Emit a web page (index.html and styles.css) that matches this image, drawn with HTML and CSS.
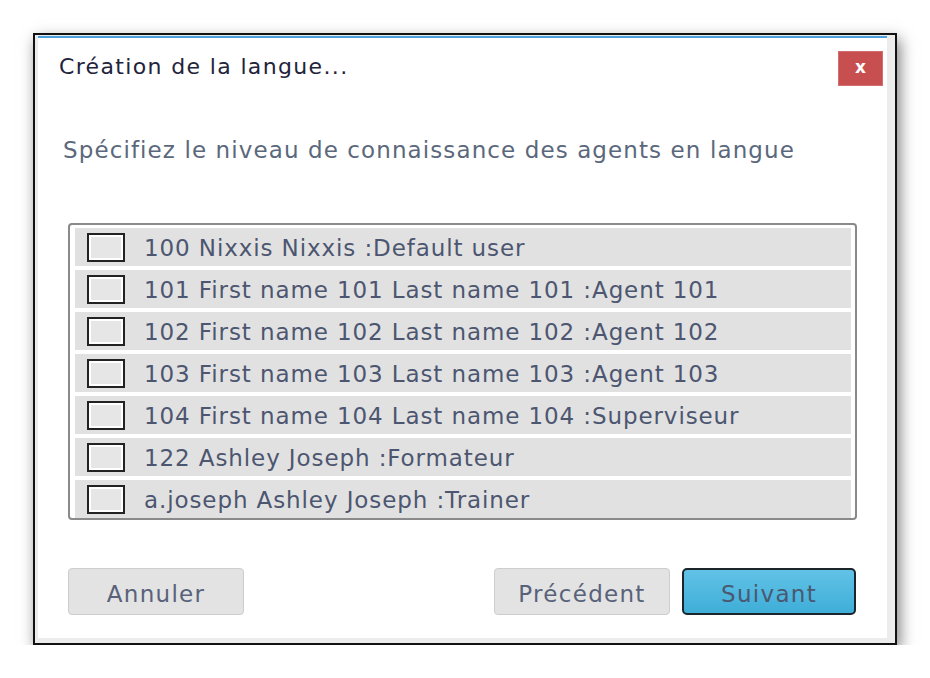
FILE: index.html
```html
<!DOCTYPE html>
<html lang="fr">
<head>
    <meta charset="UTF-8">
    <title>Création de la langue...</title>
    <link rel="stylesheet" href="styles.css">
</head>
<body>
    <div class="dlg">
        <div class="dlg-body">
            <div class="dlg-head">
                <span class="dlg-title">Création de la langue...</span>
                <span class="dlg-close">x</span>
            </div>

            <p class="dlg-hint">Spécifiez le niveau de connaissance des agents en langue</p>

            <!-- agents -->
            <div class="agent-list">
                <div class="agent-row"><span class="agent-check"></span>100 Nixxis Nixxis :Default user</div>
                <div class="agent-row"><span class="agent-check"></span>101 First name 101 Last name 101 :Agent 101</div>
                <div class="agent-row"><span class="agent-check"></span>102 First name 102 Last name 102 :Agent 102</div>
                <div class="agent-row"><span class="agent-check"></span>103 First name 103 Last name 103 :Agent 103</div>
                <div class="agent-row"><span class="agent-check"></span>104 First name 104 Last name 104 :Superviseur</div>
                <div class="agent-row"><span class="agent-check"></span>122 Ashley Joseph :Formateur</div>
                <div class="agent-row"><span class="agent-check"></span>a.joseph Ashley Joseph :Trainer</div>
            </div>

            <div class="dlg-foot">
                <span class="btn">Annuler</span>
                <span class="btn-spacer"></span>
                <span class="btn">Précédent</span>
                <span class="btn btn-primary">Suivant</span>
            </div>
        </div>
    </div>
</body>
</html>
```

FILE: styles.css
```css
body {
    margin: 0;
    background: #fff;
    font-family: "DejaVu Sans", "Open Sans", sans-serif;
}

.dlg {
    box-sizing: border-box;
    width: 864px;
    height: 612px;
    margin: 33px 0 0 33px;
    border: 2px solid #111;
    background: #ececec;
    box-shadow: 3px 6px 14px rgba(0, 0, 0, .5);
    padding: 1px 8px 5px 3px;
}

.dlg-body {
    box-sizing: border-box;
    height: 100%;
    background: #fff;
    border-top: 2px solid #4ba0e0;
}

.dlg-head {
    display: flex;
    justify-content: space-between;
    align-items: flex-start;
    padding: 13px 4px 0 21px;
}

.dlg-title {
    margin-top: 2px;
    font-size: 22px;
    letter-spacing: 1.35px;
    line-height: 28px;
    color: #23233a;
}

.dlg-close {
    width: 45px;
    height: 35px;
    background: #c84f4f;
    border: 1px solid #d27070;
    box-sizing: border-box;
    color: #fff;
    font-weight: bold;
    font-size: 17px;
    line-height: 31px;
    text-align: center;
}

.dlg-hint {
    margin: 49px 0 0 25px;
    font-size: 23px;
    letter-spacing: 1.1px;
    line-height: 30px;
    color: #5b687c;
}

.agent-list {
    box-sizing: border-box;
    height: 297px;
    margin: 58px 30px 0 30px;
    border: 2px solid #8a8a8a;
    border-radius: 4px;
    padding: 3px 4px 0 5px;
    display: flex;
    flex-direction: column;
    gap: 4px;
}

.agent-row {
    height: 38px;
    flex: none;
    display: flex;
    align-items: center;
    padding-top: 2px;
    box-sizing: border-box;
    background: #e1e1e1;
    font-size: 23px;
    letter-spacing: .9px;
    color: #4c5670;
}

.agent-check {
    box-sizing: border-box;
    width: 38px;
    height: 29px;
    margin: -2px 19px 0 12px;
    border: 2px solid #222;
    background: #e6e6e6;
    box-shadow: inset 0 0 0 2px #fff;
}

.dlg-foot {
    display: flex;
    gap: 12px;
    margin: 48px 31px 0 30px;
}

.btn-spacer {
    flex: 1;
}

.btn {
    box-sizing: border-box;
    width: 176px;
    height: 47px;
    border: 1px solid #cdcdcd;
    border-radius: 4px;
    background: #e3e3e3;
    font-size: 23px;
    letter-spacing: 1.3px;
    line-height: 50px;
    text-align: center;
    color: #58627a;
}

.btn-primary {
    width: 174px;
    border: 2px solid #1b262c;
    border-radius: 5px;
    background: linear-gradient(#62c2e6, #3eaed8);
    line-height: 48px;
    color: #4a5872;
}
```
